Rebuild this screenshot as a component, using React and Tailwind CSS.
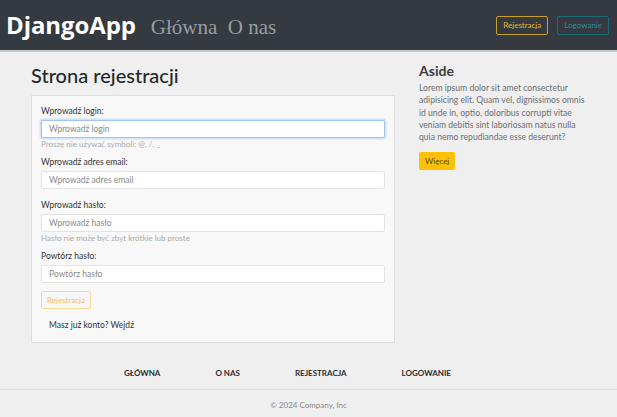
import React from 'react'

const sans = { fontFamily: '"Lato", "Open Sans", sans-serif' }

function Field({ label, placeholder, help, focused, last }) {
  return (
    <div className={help ? 'mb-[6px]' : last ? 'mb-[8px]' : 'mb-[10px]'}>
      <label className="block text-[8.5px] text-[#333] leading-[12px] mb-[3px]">{label}</label>
      <div
        className={
          'h-[18px] w-full bg-white rounded-[2px] flex items-center px-[7px] text-[8.5px] text-[#888] border ' +
          (focused ? 'border-[#9fc5f0] ring-[1.5px] ring-[#cfe2f8]' : 'border-[#e3e3e3]')
        }
      >
        {placeholder}
      </div>
      {help && <p className="text-[8px] text-[#aaa] leading-[11px] mt-[1px]">{help}</p>}
    </div>
  )
}

export default function App() {
  return (
    <div className="min-h-[417px] w-full bg-[#efefef]" style={sans}>
      {/* Header */}
      <header className="h-[52px] bg-[#343a40] border-b-2 border-[#c6c7c8] flex items-center justify-between pl-[6px] pr-[8px]">
        <div className="flex items-baseline gap-[15px]">
          <span className="text-white font-bold text-[24px] tracking-[-0.1px]" style={{ fontFamily: '"Open Sans", sans-serif' }}>
            DjangoApp
          </span>
          <span className="text-[#9a9da0] text-[21px]" style={{ fontFamily: '"Liberation Serif", serif' }}>
            Główna&nbsp; O nas
          </span>
        </div>
        <div className="flex items-center gap-[9px]">
          <span className="h-[19px] px-[6px] flex items-center rounded-[2px] border border-[#c7a02a] text-[#e5b72c] text-[8px]">
            Rejestracja
          </span>
          <span className="h-[19px] px-[6px] flex items-center rounded-[2px] border border-[#1c6a78] text-[#2d8a9c] text-[8px]">
            Logowanie
          </span>
        </div>
      </header>

      {/* Main */}
      <main className="flex gap-[24px] pl-[31px] pt-[9px]">
        <section className="w-[364px]">
          <h1 className="text-[20px] text-[#25282b] leading-[28px] font-medium mb-[6px]">Strona rejestracji</h1>
          <div className="bg-[#f8f8f8] border border-[#dedede] px-[9px] pt-[9px] pb-[11px]">
            <Field label="Wprowadź login:" placeholder="Wprowadź login" help="Proszę nie używać symboli: @, /, _" focused />
            <Field label="Wprowadź adres email:" placeholder="Wprowadź adres email" />
            <Field label="Wprowadź hasło:" placeholder="Wprowadź hasło" help="Hasło nie może być zbyt krótkie lub proste" />
            <Field label="Powtórz hasło:" placeholder="Powtórz hasło" last />
            <div className="flex w-fit h-[18px] items-center px-[5px] rounded-[2px] border border-[#fbd993] text-[#f6b86a] text-[8px]">
              Rejestracja
            </div>
            <p className="text-[8.5px] text-[#333] mt-[10px] ml-[8px] leading-[12px]">Masz już konto? Wejdź</p>
          </div>
        </section>

        <aside className="w-[170px] pt-[1px]">
          <h2 className="text-[14px] font-bold text-[#3a3d40] leading-[18px] mb-[2px]">Aside</h2>
          <p className="text-[8.6px] text-[#6b6e71] leading-[12.3px]">
            Lorem ipsum dolor sit amet consectetur adipisicing elit. Quam vel, dignissimos omnis id unde in, optio, doloribus corrupti vitae veniam debitis sint laboriosam natus nulla quia nemo repudiandae esse deserunt?
          </p>
          <div className="mt-[9px] flex w-fit h-[18px] items-center px-[6px] rounded-[2px] bg-[#ffc107] text-[#5a4500] text-[8px]">
            Więcej
          </div>
        </aside>
      </main>

      {/* Footer */}
      <footer className="mt-[13px]">
        <nav className="flex gap-[55px] pl-[124px] h-[34px] items-center border-b border-[#e2e2e2] text-[8px] font-bold text-[#2a2d30]">
          <span>GŁÓWNA</span>
          <span>O NAS</span>
          <span>REJESTRACJA</span>
          <span>LOGOWANIE</span>
        </nav>
        <p className="text-center text-[8px] text-[#888] pt-[9px] pb-[8px]">© 2024 Company, Inc</p>
      </footer>
    </div>
  )
}
